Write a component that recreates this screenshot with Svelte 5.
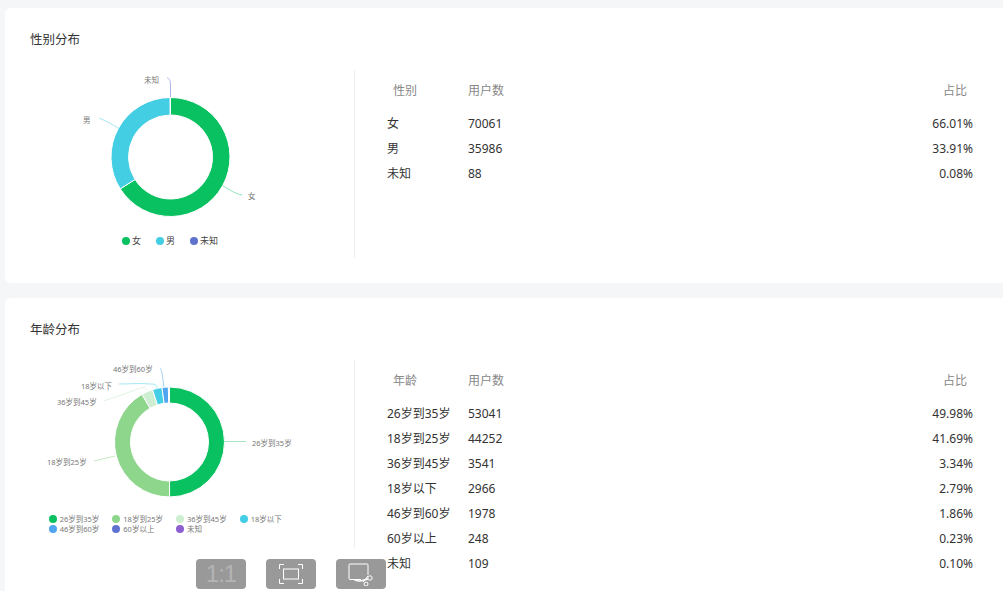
<script>
    const green = "#09c160";

    const gender = {
        title: "性别分布",
        head: "性别",
        cx: 140.5,
        cy: 87,
        outer: 59.5,
        inner: 42,
        slices: [
            { name: "女", users: "70061", pct: 66.01, color: green, line: "M193 116 C200 120 206 124 212 125", lineColor: "#8fe3b5", x: 218, y: 129 },
            { name: "男", users: "35986", pct: 33.91, color: "#43cee4", line: "M88 58 C82 54 76 51 69 48", lineColor: "#a4e8f2", x: 53, y: 53 },
            { name: "未知", users: "88", pct: 0.08, color: "#5e72ce", line: "M140.5 27 L140.5 15 C140.5 10 139 8 137 8", lineColor: "#aab5e6", x: 114, y: 13 }
        ]
    };

    const age = {
        title: "年龄分布",
        head: "年龄",
        cx: 139.5,
        cy: 82,
        outer: 55,
        inner: 39,
        slices: [
            { name: "26岁到35岁", users: "53041", pct: 49.98, color: green, line: "M194 81.5 L216 81.5", lineColor: "#a6e6c4", x: 222, y: 86 },
            { name: "18岁到25岁", users: "44252", pct: 41.69, color: "#8fd68d", line: "M85 96 L64 101", lineColor: "#c4e9c3", x: 17, y: 105 },
            { name: "36岁到45岁", users: "3541", pct: 3.34, color: "#cdeed0", line: "M116 30 C116 27 114 27 111 28 L74 41", lineColor: "#e2f5e4", x: 27, y: 45 },
            { name: "18岁以下", users: "2966", pct: 2.79, color: "#43cde6", line: "M127 28 C127 24 124 24 120 24 C110 23 100 24 89 24", lineColor: "#a4e8f2", x: 51, y: 29 },
            { name: "46岁到60岁", users: "1978", pct: 1.86, color: "#4fa5f0", line: "M134 27 L132 13 C131 10 131 9 130 8", lineColor: "#a9d2f7", x: 83, y: 12 },
            { name: "60岁以上", users: "248", pct: 0.23, color: "#5f72d0", hideLabel: true },
            { name: "未知", users: "109", pct: 0.1, color: "#8e5fd0", hideLabel: true }
        ]
    };

    const sections = [
        { ...gender, kind: "gender" },
        { ...age, kind: "age" }
    ];

    function polar(cx, cy, r, turn) {
        const a = turn * 2 * Math.PI;
        return [cx + r * Math.sin(a), cy - r * Math.cos(a)];
    }

    // one ring segment, start and end are fractions of the full circle
    function arc(s, start, end) {
        const large = end - start > 0.5 ? 1 : 0;
        const [x1, y1] = polar(s.cx, s.cy, s.outer, start);
        const [x2, y2] = polar(s.cx, s.cy, s.outer, end);
        const [x3, y3] = polar(s.cx, s.cy, s.inner, end);
        const [x4, y4] = polar(s.cx, s.cy, s.inner, start);
        return `M${x1} ${y1} A${s.outer} ${s.outer} 0 ${large} 1 ${x2} ${y2} L${x3} ${y3} A${s.inner} ${s.inner} 0 ${large} 0 ${x4} ${y4} Z`;
    }

    function segments(s) {
        const total = s.slices.reduce((n, d) => n + d.pct, 0);
        let at = 0;
        return s.slices.map((d) => {
            const start = at / total;
            at += d.pct;
            return { ...d, d: arc(s, start, at / total) };
        });
    }
</script>

<main>
    {#each sections as s}
        <section class="card {s.kind}">
            <h2>{s.title}</h2>
            <div class="body">
                <div class="chart">
                    <svg class="pie" width="324" height={s.kind === "age" ? 154 : 164} viewBox="0 0 324 {s.kind === 'age' ? 154 : 164}">
                        {#each segments(s) as d}
                            <path d={d.d} fill={d.color} stroke="#fff" stroke-width="1" />
                            {#if !d.hideLabel}
                                <path d={d.line} fill="none" stroke={d.lineColor} stroke-width="1" />
                                <text x={d.x} y={d.y}>{d.name}</text>
                            {/if}
                        {/each}
                    </svg>
                    <ul class="legend">
                        {#each s.slices as d}
                            <li><i style="background: {d.color}"></i>{d.name}</li>
                        {/each}
                    </ul>
                </div>
                <div class="table">
                    <div class="row head">
                        <span class="name">{s.head}</span>
                        <span class="users">用户数</span>
                        <span class="pct">占比</span>
                    </div>
                    {#each s.slices as d}
                        <div class="row">
                            <span class="name">{d.name}</span>
                            <span class="users">{d.users}</span>
                            <span class="pct">{d.pct.toFixed(2)}%</span>
                        </div>
                    {/each}
                </div>
            </div>
        </section>
    {/each}

    <div class="tools">
        <button class="one">1:1</button>
        <button aria-label="适应屏幕">
            <svg width="24" height="20" viewBox="0 0 24 20" fill="none" stroke="#fff" stroke-width="1">
                <path d="M0.5 5V0.5H5M19 0.5H23.5V5M23.5 15V19.5H19M5 19.5H0.5V15" />
                <rect x="4.5" y="5" width="15" height="10" />
            </svg>
        </button>
        <button aria-label="截图">
            <svg width="26" height="24" viewBox="0 0 26 24" fill="none" stroke="#fff" stroke-width="1">
                <path d="M13 17.5H2Q1 17.5 1 16.5V3Q1 2 2 2H19Q20 2 20 3V13" />
                <path d="M6 17.5C9 19.5 12 19.5 16 18L20 17" stroke-width="1.4" />
                <path d="M15 20L20 14" />
                <circle cx="22" cy="16" r="2.2" />
                <circle cx="18" cy="22" r="2" />
            </svg>
        </button>
    </div>
</main>

<style>
    :global(body) {
        background: #f5f6f8;
        overflow: hidden;
    }

    main {
        position: relative;
        box-sizing: border-box;
        width: 1003px;
        height: 591px;
        overflow: hidden;
        padding: 8px 0 0 5px;
        font-family: "Noto Sans", "Noto Sans CJK SC", sans-serif;
        font-size: 12px;
        color: #333;
    }

    .card {
        box-sizing: border-box;
        width: 1020px;
        height: 275px;
        margin-bottom: 15px;
        padding: 23px 0 0 25px;
        background: #fff;
        border-radius: 6px;
    }

    .card.age {
        height: 300px;
        margin-bottom: 0;
    }

    h2 {
        margin: 0;
        font-size: 12.5px;
        font-weight: 400;
        line-height: 18px;
        color: #333;
    }

    .body {
        display: flex;
        margin-top: 21px;
    }

    .chart {
        box-sizing: border-box;
        width: 325px;
        height: 188px;
        border-right: 1px solid #eceef1;
    }

    .pie {
        display: block;
    }

    .pie text {
        font-size: 7.5px;
        fill: #777;
    }

    .legend {
        display: flex;
        justify-content: center;
        gap: 15px;
        width: 280px;
        margin: 0;
        padding: 2px 0 0;
        list-style: none;
        font-size: 9px;
        line-height: 10px;
        color: #444;
    }

    .legend li {
        display: flex;
        align-items: center;
    }

    .legend i {
        width: 8px;
        height: 8px;
        margin-right: 2px;
        border-radius: 50%;
    }

    .age .legend {
        display: grid;
        grid-template-columns: repeat(4, 63.7px);
        gap: 0;
        padding: 0 0 0 19px;
        margin-left: -13px;
        font-size: 7.5px;
        color: #777;
    }

    .age .legend i {
        margin-right: 3px;
    }

    .table {
        box-sizing: border-box;
        width: 618px;
        padding: 8px 0 0 32px;
    }

    .row {
        display: flex;
        height: 25px;
        align-items: center;
        line-height: 25px;
    }

    .row.head {
        height: 25px;
        margin-bottom: 8px;
        color: #888;
    }

    .name {
        width: 81px;
        white-space: nowrap;
    }

    .head .name {
        padding-left: 6px;
        width: 75px;
    }

    .users {
        flex: 1;
    }

    .pct {
        text-align: right;
    }

    .head .pct {
        padding-right: 6px;
    }

    .tools {
        position: absolute;
        left: 196px;
        top: 559px;
        display: flex;
        gap: 20px;
    }

    .tools button {
        display: flex;
        align-items: center;
        justify-content: center;
        width: 50px;
        height: 30px;
        padding: 0;
        border: none;
        border-radius: 4px;
        background: #999;
    }

    .tools .one {
        font-family: "Liberation Sans", sans-serif;
        font-size: 24px;
        letter-spacing: -1px;
        color: #b4b4b4;
    }
</style>
